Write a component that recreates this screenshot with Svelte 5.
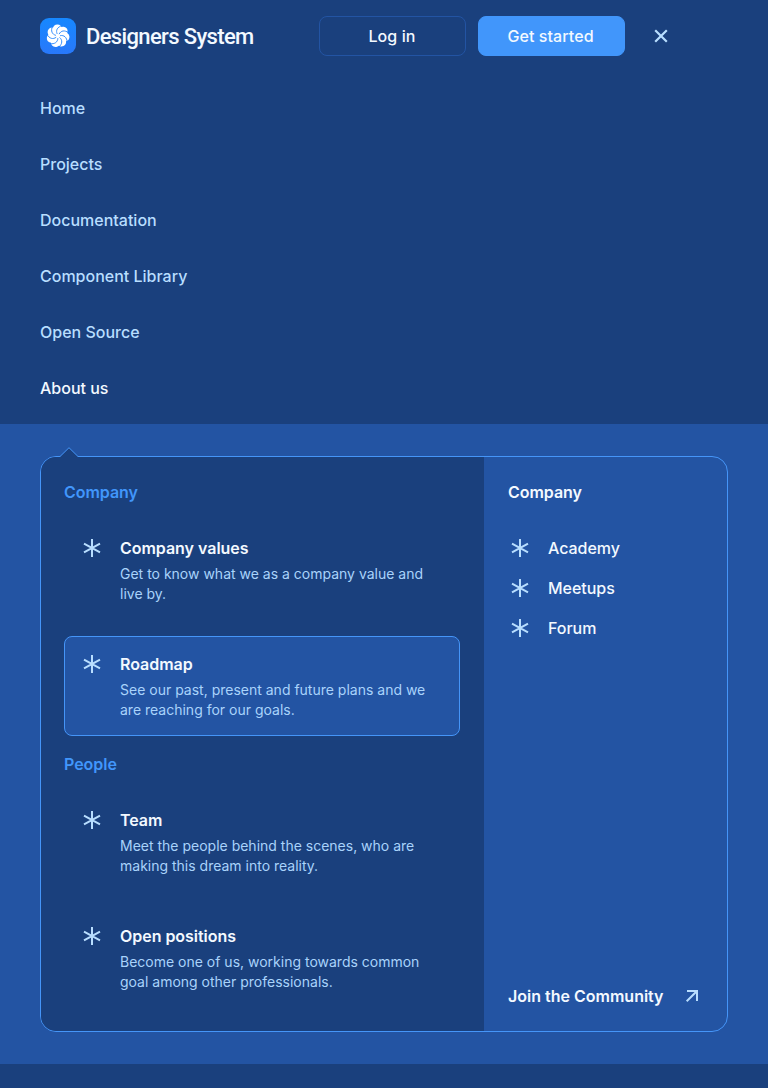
<script>
  const links = ['Home', 'Projects', 'Documentation', 'Component Library', 'Open Source', 'About us'];
  const groups = [
    {
      title: 'Company',
      items: [
        { name: 'Company values', text: 'Get to know what we as a company value and live by.' },
        { name: 'Roadmap', text: 'See our past, present and future plans and we are reaching for our goals.', active: true }
      ]
    },
    {
      title: 'People',
      items: [
        { name: 'Team', text: 'Meet the people behind the scenes, who are making this dream into reality.' },
        { name: 'Open positions', text: 'Become one of us, working towards common goal among other professionals.' }
      ]
    }
  ];
  const community = ['Academy', 'Meetups', 'Forum'];
  const blades = Array.from({ length: 7 }, (_, i) => (i * 360) / 7);
</script>

{#snippet asterisk()}
  <svg class="icon" width="24" height="24" viewBox="0 0 24 24" fill="none" stroke="currentColor" stroke-width="2">
    <path d="M12 3v18M4 7.6l16 8.8M4 16.4l16-8.8" />
  </svg>
{/snippet}

<header>
  <div class="brand">
    <svg width="36" height="36" viewBox="0 0 36 36">
      <defs>
        <linearGradient id="tile" x1="0" y1="0" x2="0" y2="1">
          <stop offset="0" stop-color="#1688ff" />
          <stop offset="1" stop-color="#2878fa" />
        </linearGradient>
      </defs>
      <rect width="36" height="36" rx="9" fill="url(#tile)" />
      <g transform="translate(18 18)">
        <circle r="8" fill="#fff" />
        {#each blades as angle}
          <circle transform={`rotate(${angle})`} cx="-.6" cy="-6.9" r="4.6" fill="#fff" />
        {/each}
        {#each blades as angle}
          <path
            transform={`rotate(${angle})`}
            d="M-.8-2C-2.4-5.6-.8-9 4.2-10.4"
            fill="none" stroke="#1b80fd" stroke-width=".8" />
        {/each}
      </g>
    </svg>
    <span>Designers System</span>
  </div>
  <button class="login">Log in</button>
  <button class="start">Get started</button>
  <button class="close" aria-label="Close">
    <svg width="24" height="24" viewBox="0 0 24 24" fill="none" stroke="currentColor" stroke-width="2.2">
      <path d="M6.2 6.2l11.6 11.6M17.8 6.2L6.2 17.8" />
    </svg>
  </button>
</header>

<nav>
  {#each links as link}
    <a href="#top" class:current={link === 'About us'}>{link}</a>
  {/each}
</nav>

<section>
  <div class="panel">
    <svg class="caret" width="22" height="12" viewBox="0 0 22 12">
      <path d="M1 12L2 10.5L11 1.7L20 10.5L21 12Z" fill="#1a407d" />
      <path d="M1 10.5H2L11 1.7L20 10.5H21" fill="none" stroke="#4595f8" />
    </svg>
    <div class="main">
      {#each groups as group}
        <h2>{group.title}</h2>
        {#each group.items as item}
          <a href="#top" class="card" class:active={item.active}>
            {@render asterisk()}
            <div>
              <h3>{item.name}</h3>
              <p>{item.text}</p>
            </div>
          </a>
        {/each}
      {/each}
    </div>
    <aside>
      <h2>Company</h2>
      <div class="list">
        {#each community as name}
          <a href="#top">{@render asterisk()}<span>{name}</span></a>
        {/each}
      </div>
      <a href="#top" class="join">
        <span>Join the Community</span>
        <svg class="icon" width="24" height="24" viewBox="0 0 24 24" fill="none" stroke="currentColor" stroke-width="2">
          <path d="M6.7 17.3L17 7M7 7H17v10" />
        </svg>
      </a>
    </aside>
  </div>
</section>

<style>
  :global(body) {
    margin: 0;
    min-height: 1088px;
    background: #1a407d;
    font: 500 16px/24px Inter, sans-serif;
    color: #f3f9ff;
  }
  a { color: inherit; text-decoration: none; }
  h2, h3, p { margin: 0; }
  svg { display: block; flex: none; }
  header {
    display: flex;
    align-items: center;
    height: 72px;
    padding-left: 40px;
  }
  .brand {
    display: flex;
    align-items: center;
    gap: 10px;
    width: 279px;
    font: 500 22px/28px Roboto, sans-serif;
    letter-spacing: -0.64px;
    white-space: nowrap;
  }
  .brand span { padding-top: 2px; }
  button {
    box-sizing: border-box;
    width: 147px;
    height: 40px;
    padding: 0;
    border: 1px solid #2354a3;
    border-radius: 8px;
    background: none;
    color: inherit;
    font: inherit;
    letter-spacing: 0.08px;
  }
  .login { padding-right: 1px; }
  .start { margin-left: 12px; padding-right: 2px; border-color: #4196fb; background: #4196fb; }
  .close {
    display: grid;
    place-items: center;
    width: 40px;
    margin-left: 16px;
    border: 0;
    color: #b8deff;
  }
  nav {
    display: flex;
    flex-direction: column;
    height: 352px;
  }
  nav a {
    height: 24px;
    padding: 24px 40px 8px;
    color: #b8deff;
    letter-spacing: 0;
  }
  nav .current { color: #f3f9ff; }
  section {
    padding: 32px 40px;
    background: #2354a3;
  }
  .panel {
    position: relative;
    display: flex;
    box-sizing: border-box;
    height: 576px;
    border: 1px solid #4595f8;
    border-radius: 16px;
  }
  .caret { position: absolute; left: 17px; top: -11px; }
  .main {
    box-sizing: border-box;
    width: 443px;
    padding: 23px 24px 0 23px;
    border-radius: 15px 0 0 15px;
    background: #1a407d;
  }
  h2 { font: 600 16px/24px Inter, sans-serif; letter-spacing: -0.03px; }
  .main h2 { margin-bottom: 16px; color: #4196fb; }
  .card {
    box-sizing: border-box;
    display: flex;
    gap: 16px;
    width: 396px;
    height: 100px;
    margin-bottom: 16px;
    padding: 15px;
    border: 1px solid transparent;
    border-radius: 8px;
  }
  .card.active { border-color: #4595f8; background: #2354a3; }
  .icon { color: #b8deff; }
  h3 { font: 600 16px/24px Inter, sans-serif; letter-spacing: -0.03px; }
  p {
    width: 324px;
    margin-top: 4px;
    font: 400 14px/20px Inter, sans-serif;
    color: #a9d3fb;
  }
  aside {
    flex: 1;
    display: flex;
    flex-direction: column;
    padding: 23px 23px 23px 24px;
  }
  .list { display: grid; gap: 16px; margin-top: 32px; letter-spacing: -0.03px; }
  .list a { display: flex; gap: 16px; }
  .join {
    display: flex;
    justify-content: space-between;
    margin-top: auto;
    font-weight: 600;
  }
</style>
